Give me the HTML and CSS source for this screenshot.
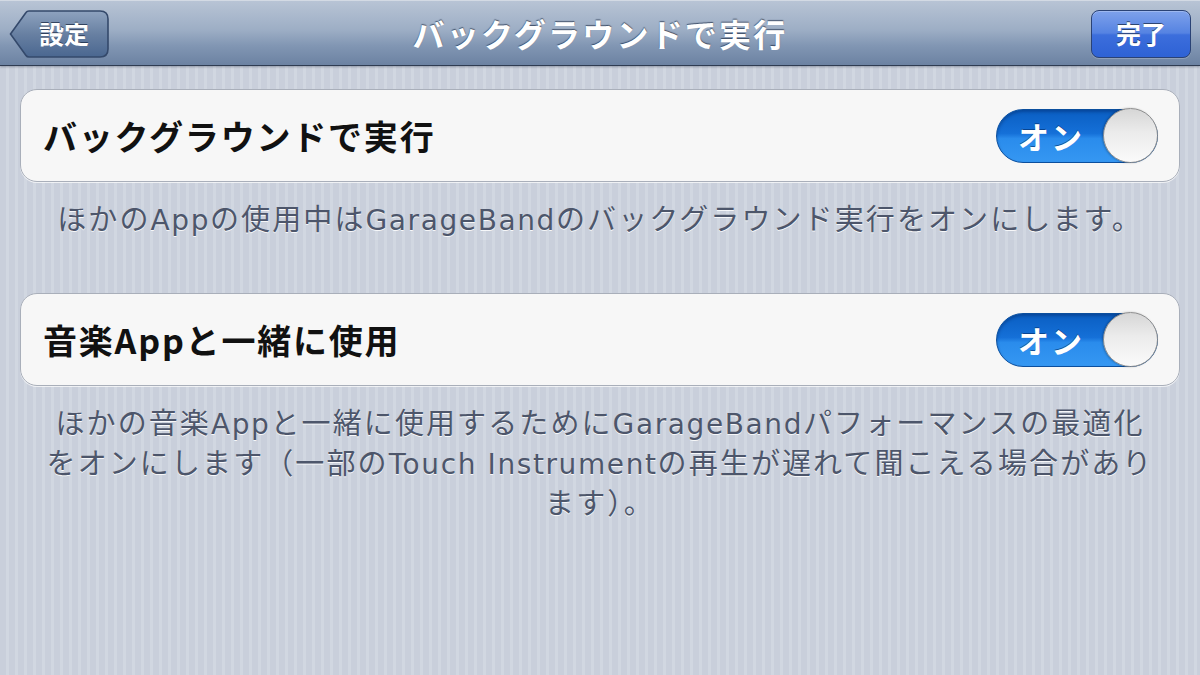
FILE: index.html
```html
<!DOCTYPE html>
<html lang="ja">
<head>
<meta charset="utf-8">
<title>バックグラウンドで実行</title>
<link rel="stylesheet" href="styles.css">
</head>
<body>
<div class="screen">
  <header class="navbar">
    <div class="back-btn">
      <svg class="back-shape" viewBox="0 0 100 48" width="100" height="48" preserveAspectRatio="none">
        <defs>
          <linearGradient id="bg1" x1="0" y1="0" x2="0" y2="1">
            <stop offset="0" stop-color="#8ea3bf"/>
            <stop offset="0.5" stop-color="#6880a2"/>
            <stop offset="1" stop-color="#4a6790"/>
          </linearGradient>
        </defs>
        <path d="M1.5 24 L17 2.5 Q18 1 20 1 H91 Q99 1 99 9 V39 Q99 47 91 47 H20 Q18 47 17 45.5 Z" fill="url(#bg1)" stroke="#34496b" stroke-width="1.6"/>
      </svg>
      <span class="btn-label">設定</span>
    </div>
    <h1 class="nav-title">バックグラウンドで実行</h1>
    <div class="done-btn"><span class="btn-label">完了</span></div>
  </header>

  <main class="content">
    <section class="group">
      <div class="cell">
        <span class="cell-label">バックグラウンドで実行</span>
        <div class="toggle"><span class="toggle-text">オン</span><span class="knob"></span></div>
      </div>
      <p class="footer">ほかの<span class="lat">App</span>の使用中は<span class="lat">GarageBand</span>のバックグラウンド実行をオンにします。</p>
    </section>

    <section class="group">
      <div class="cell">
        <span class="cell-label">音楽Appと一緒に使用</span>
        <div class="toggle"><span class="toggle-text">オン</span><span class="knob"></span></div>
      </div>
      <p class="footer">ほかの音楽<span class="lat">App</span>と一緒に使用するために<span class="lat">GarageBand</span>パフォーマンスの最適化<br>をオンにします（一部の<span class="lat">Touch Instrument</span>の再生が遅れて聞こえる場合があり<br>ます）。</p>
    </section>
  </main>
</div>
</body>
</html>
```

FILE: styles.css
```css
html, body {
  margin: 0;
  padding: 0;
}
body {
  width: 1200px;
  height: 675px;
  overflow: hidden;
  font-family: "Noto Sans CJK JP", "Noto Sans", sans-serif;
}
.screen {
  width: 1200px;
  height: 675px;
  background: repeating-linear-gradient(90deg, #c9cfdb 0px, #c9cfdb 6px, #d1d7e1 6px, #d1d7e1 9px);
  display: flex;
  flex-direction: column;
}
.navbar {
  height: 66px;
  flex: 0 0 66px;
  box-sizing: border-box;
  border-top: 1px solid #d3dae4;
  border-bottom: 1px solid #2f3c52;
  background: linear-gradient(#b8c4d5 0%, #9daec5 45%, #8196b3 70%, #6c82a2 100%);
  display: flex;
  align-items: center;
  justify-content: space-between;
  padding: 0 9px 0 9px;
  box-shadow: 0 1px 2px rgba(40, 50, 70, 0.35);
  position: relative;
  z-index: 1;
}
.back-btn {
  position: relative;
  width: 100px;
  height: 48px;
  display: flex;
  align-items: center;
  justify-content: center;
  padding-left: 10px;
  box-sizing: border-box;
  margin-top: 1px;
}
.back-shape {
  position: absolute;
  left: 0;
  top: 0;
  z-index: 0;
}
.btn-label {
  position: relative;
  color: #fff;
  font-weight: 700;
  font-size: 25px;
  line-height: 1;
  text-shadow: 0 -1px 0 rgba(20, 35, 60, 0.7);
}
.nav-title {
  margin: 0;
  color: #fff;
  font-size: 32px;
  font-weight: 700;
  line-height: 1;
  letter-spacing: 2.2px;
  text-shadow: 0 -1px 1px rgba(40, 55, 80, 0.8);
}
.done-btn {
  width: 100px;
  height: 48px;
  box-sizing: border-box;
  margin-top: 1px;
  border-radius: 8px;
  border: 1.5px solid #2a4275;
  background: linear-gradient(#7ea1eb 0%, #5583e2 48%, #3c6edc 52%, #2e62d5 100%);
  box-shadow: inset 0 1px 0 rgba(255, 255, 255, 0.25), 0 1px 0 rgba(255, 255, 255, 0.2);
  display: flex;
  align-items: center;
  justify-content: center;
}
.content {
  padding: 23px 20px 0 20px;
  display: flex;
  flex-direction: column;
}
.group {
  display: flex;
  flex-direction: column;
  margin-bottom: 56px;
}
.cell {
  height: 93px;
  box-sizing: border-box;
  background: #f7f7f7;
  border: 1.5px solid #a9afba;
  border-radius: 17px;
  box-shadow: 0 1px 0 rgba(255, 255, 255, 0.7);
  display: flex;
  align-items: center;
  justify-content: space-between;
  padding: 0 21px 0 22px;
}
.cell-label {
  font-size: 34px;
  font-weight: 700;
  color: #111;
  line-height: 1;
  letter-spacing: 1.8px;
}
.toggle {
  width: 162px;
  height: 54px;
  border-radius: 27px;
  box-sizing: border-box;
  background: linear-gradient(#0a5ec2 0%, #1570d8 45%, #2a8cec 55%, #3597f2 100%);
  border: 1px solid #0b4f9e;
  display: flex;
  align-items: center;
  justify-content: space-between;
  padding-left: 21px;
  position: relative;
  box-shadow: inset 0 2px 3px rgba(0, 30, 80, 0.35);
}
.toggle-text {
  color: #fff;
  font-size: 31px;
  font-weight: 700;
  line-height: 1;
  letter-spacing: 2px;
  text-shadow: 0 -1px 0 rgba(0, 40, 100, 0.6);
}
.knob {
  width: 55px;
  height: 55px;
  margin-right: -1px;
  border-radius: 50%;
  box-sizing: border-box;
  border: 1.5px solid #8f8f8f;
  background: linear-gradient(#d6d6d6 0%, #ececec 45%, #fafafa 100%);
  box-shadow: -1px 0 2px rgba(0, 0, 0, 0.25);
}
.footer {
  margin: 15px 0 0 0;
  text-align: center;
  white-space: nowrap;
  font-size: 29px;
  line-height: 40px;
  letter-spacing: 2.1px;
  color: #4d566b;
  text-shadow: 0 1px 0 rgba(255, 255, 255, 0.85);
}
.lat {
  font-family: "DejaVu Sans", "Noto Sans", sans-serif;
  font-size: 28px;
  line-height: 1;
  letter-spacing: 1.6px;
}
```
